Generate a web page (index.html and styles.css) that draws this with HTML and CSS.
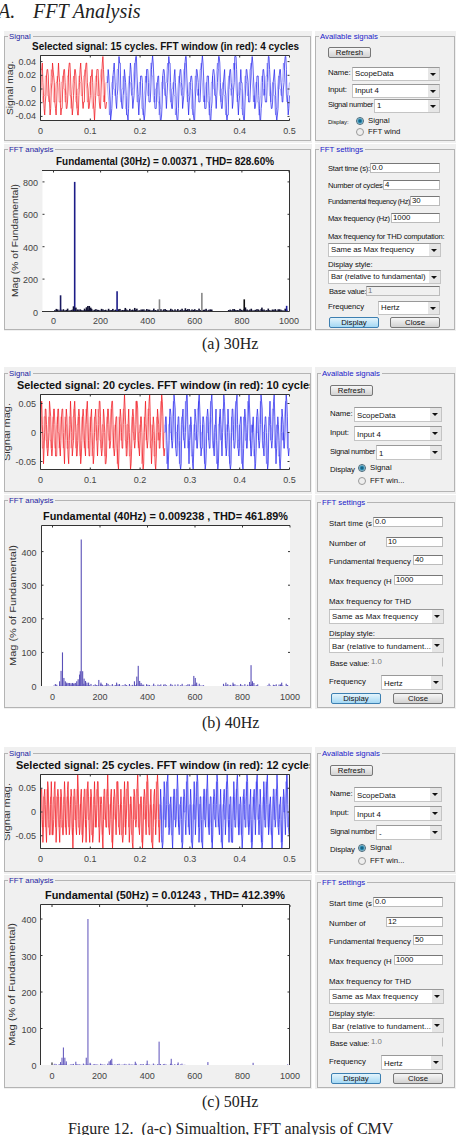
FILE: index.html
```html
<!DOCTYPE html>
<html lang="en">
<head>
<meta charset="utf-8">
<title>FFT Analysis</title>
<link rel="stylesheet" href="styles.css">
</head>
<body>
<h2><span class="num">A.</span>FFT Analysis</h2>

<div class="figure fig-a">
	<div class="col">
		<div class="pane"><div class="panel signal"><span class="legend">Signal</span><svg id="sig_a"></svg></div></div>
		<div class="pane"><div class="panel fft"><span class="legend">FFT analysis</span><svg id="fft_a"></svg></div></div>
	</div>
	<div class="col side">
		<div class="pane"><div class="panel signal"><span class="legend">Available signals</span>
			<div class="row r-refresh"><span class="btn small">Refresh</span></div>
			<div class="row r-name"><label>Name:</label><span class="combo w88">ScopeData</span></div>
			<div class="row r-input"><label>Input:</label><span class="combo w88">Input 4</span></div>
			<div class="row r-number"><label>Signal number</label><span class="combo w66">1</span></div>
			<div class="row r-radio"><label class="tiny">Display:</label><i class="radio on"></i><span>Signal</span></div>
			<div class="row r-radio"><label></label><i class="radio"></i><span>FFT wind</span></div>
		</div></div>
		<div class="pane"><div class="panel fft"><span class="legend">FFT settings</span>
			<div class="row s-start"><label>Start time (s):</label><span class="field w70">0.0</span></div>
			<div class="row s-cycles"><label>Number of cycles</label><span class="field w57">4</span></div>
			<div class="row s-fund"><label>Fundamental frequency (Hz)</label><span class="field w30">30</span></div>
			<div class="row s-max"><label>Max frequency (Hz)</label><span class="field w49">1000</span></div>
			<div class="row s-thd"><label>Max frequency for THD computation:</label></div>
			<div class="row s-same"><span class="combo full">Same as Max frequency</span></div>
			<div class="row s-style"><label>Display style:</label></div>
			<div class="row s-bar"><span class="combo full">Bar (relative to fundamental)</span></div>
			<div class="row s-base"><label>Base value:</label><span class="field off">1</span></div>
			<div class="row s-freq"><label>Frequency</label><span class="combo w62">Hertz</span></div>
			<div class="row s-btns"><span class="btn blue">Display</span><span class="btn">Close</span></div>
		</div></div>
	</div>
</div>
<p class="caption">(a) 30Hz</p>

<div class="figure fig-b">
	<div class="col">
		<div class="pane"><div class="panel signal"><span class="legend">Signal</span><svg id="sig_b"></svg></div></div>
		<div class="pane"><div class="panel fft"><span class="legend">FFT analysis</span><svg id="fft_b"></svg></div></div>
	</div>
	<div class="col side">
		<div class="pane"><div class="panel signal"><span class="legend">Available signals</span>
			<div class="row r-refresh"><span class="btn small">Refresh</span></div>
			<div class="row r-name"><label>Name:</label><span class="combo w88">ScopeData</span></div>
			<div class="row r-input"><label>Input:</label><span class="combo w88">Input 4</span></div>
			<div class="row r-number"><label>Signal number</label><span class="combo w66">1</span></div>
			<div class="row r-radio"><label>Display</label><i class="radio on"></i><span>Signal</span></div>
			<div class="row r-radio"><label></label><i class="radio"></i><span>FFT win...</span></div>
		</div></div>
		<div class="pane"><div class="panel fft"><span class="legend">FFT settings</span>
			<div class="row s-start"><label>Start time (s</label><span class="field w70">0.0</span></div>
			<div class="row s-cycles"><label>Number of</label><span class="field w57">10</span></div>
			<div class="row s-fund"><label>Fundamental frequency</label><span class="field w30">40</span></div>
			<div class="row s-max"><label>Max frequency (H</label><span class="field w49">1000</span></div>
			<div class="row s-thd"><label>Max frequency for THD</label></div>
			<div class="row s-same"><span class="combo full">Same as Max frequency</span></div>
			<div class="row s-style"><label>Display style:</label></div>
			<div class="row s-bar"><span class="combo full">Bar (relative to fundament...</span></div>
			<div class="row s-base"><label>Base value:</label><span class="field off">1.0</span></div>
			<div class="row s-freq"><label>Frequency</label><span class="combo w62">Hertz</span></div>
			<div class="row s-btns"><span class="btn blue">Display</span><span class="btn">Close</span></div>
		</div></div>
	</div>
</div>
<p class="caption cap-b">(b) 40Hz</p>

<div class="figure fig-c">
	<div class="col">
		<div class="pane"><div class="panel signal"><span class="legend">Signal</span><svg id="sig_c"></svg></div></div>
		<div class="pane"><div class="panel fft"><span class="legend">FFT analysis</span><svg id="fft_c"></svg></div></div>
	</div>
	<div class="col side">
		<div class="pane"><div class="panel signal"><span class="legend">Available signals</span>
			<div class="row r-refresh"><span class="btn small">Refresh</span></div>
			<div class="row r-name"><label>Name:</label><span class="combo w88">ScopeData</span></div>
			<div class="row r-input"><label>Input:</label><span class="combo w88">Input 4</span></div>
			<div class="row r-number"><label>Signal number</label><span class="combo w66">-</span></div>
			<div class="row r-radio"><label>Display</label><i class="radio on"></i><span>Signal</span></div>
			<div class="row r-radio"><label></label><i class="radio"></i><span>FFT win...</span></div>
		</div></div>
		<div class="pane"><div class="panel fft"><span class="legend">FFT settings</span>
			<div class="row s-start"><label>Start time (s</label><span class="field w70">0.0</span></div>
			<div class="row s-cycles"><label>Number of</label><span class="field w57">12</span></div>
			<div class="row s-fund"><label>Fundamental frequency</label><span class="field w30">50</span></div>
			<div class="row s-max"><label>Max frequency (H</label><span class="field w49">1000</span></div>
			<div class="row s-thd"><label>Max frequency for THD</label></div>
			<div class="row s-same"><span class="combo full">Same as Max frequency</span></div>
			<div class="row s-style"><label>Display style:</label></div>
			<div class="row s-bar"><span class="combo full">Bar (relative to fundament...</span></div>
			<div class="row s-base"><label>Base value:</label><span class="field off">1.0</span></div>
			<div class="row s-freq"><label>Frequency</label><span class="combo w62">Hertz</span></div>
			<div class="row s-btns"><span class="btn blue">Display</span><span class="btn">Close</span></div>
		</div></div>
	</div>
</div>
<p class="caption cap-c">(c) 50Hz</p>
<p class="title">Figure 12.&nbsp; (a-c) Simualtion, FFT analysis of CMV</p>

<script src="charts.js"></script>
</body>
</html>
```
FILE: styles.css
```css
body {
	margin:0;
	width:457px;
	height:1135px;
	overflow:hidden;
	background:#fff;
	color:#222;
	font-family:"Liberation Serif",serif;
}
h2 {
	margin:0;
	height:31px;
	font:italic 20px/23px "Liberation Serif",serif;
	white-space:nowrap;
}
h2 .num {
	display:inline-block;
	width:35px;
	margin-left:-2px;
}
.caption {
	margin:0;
	padding-left:202px;
	height:36px;
	font-size:16px;
	line-height:25px;
}
.cap-b {
	height:38px;
	line-height:28px;
}
.cap-c {
	height:32px;
}
.title {
	margin:-1px 0 0;
	padding-left:68px;
	font-size:16px;
	line-height:18px;
	white-space:nowrap;
	letter-spacing:-0.03px;
}

/* group boxes */
.figure {
	display:flex;
	gap:3px;
	padding-left:4px;
	font-family:"Liberation Sans",Arial,sans-serif;
}
.col {
	display:flex;
	flex-direction:column;
	gap:1px;
	width:308px;
}
.side {
	width:141px;
}
.pane {
	background:#f0f0f0;
	padding:5px 1px 2px 0;
}
.panel {
	position:relative;
	box-sizing:border-box;
	border:1px solid #b4b4b4;
}
.legend {
	position:absolute;
	left:3px;
	top:-5px;
	padding:0 2px 0 1px;
	background:#f0f0f0;
	color:#1c1ca0;
	font-size:7.8px;
	line-height:9px;
	white-space:nowrap;
}
.side .legend {
	color:#2020c8;
}
svg {
	display:block;
	width:100%;
	height:100%;
	overflow:hidden;
}
.fig-a .signal { height:105px; }
.fig-a .fft { height:181px; }
.fig-b .pane:first-child, .fig-c .pane:first-child { padding-top:6px; }
.fig-b .signal, .fig-c .signal { height:119px; }
.fig-b .fft, .fig-c .fft { height:208px; }
.fig-b .side .pane:last-child, .fig-c .side .pane:last-child { padding-top:7px; }
.fig-b .side .fft, .fig-c .side .fft { height:206px; }
.fig-b .side .panel, .fig-c .side .panel { margin-left:2px; }
.fig-a .pane:last-child, .fig-b .pane:last-child, .fig-c .pane:last-child { padding-bottom:1px; }

/* controls */
.row {
	display:flex;
	align-items:flex-start;
	width:112px;
	margin-left:12px;
	font-size:7.8px;
	line-height:10px;
	white-space:nowrap;
	color:#111;
}
.row label {
	flex:1;
	min-width:0;
	padding-top:1px;
	letter-spacing:-0.1px;
}
.row .tiny {
	font-size:6px;
}
.combo, .field, .btn {
	position:relative;
	box-sizing:border-box;
	flex:none;
}
.combo {
	height:15px;
	padding:2px 0 0 2px;
	border:1px solid #c4c4c4;
	border-top-color:#999;
	background:#fff;
}
.combo:before {
	content:"";
	position:absolute;
	right:0;
	top:0;
	width:11px;
	height:100%;
	background:#e6e6e6;
}
.combo:after {
	content:"";
	position:absolute;
	right:3px;
	top:5px;
	border:3px solid transparent;
	border-top:3px solid #111;
	border-bottom:0;
}
.field {
	height:10px;
	padding-left:1px;
	border:1px solid #bbb;
	border-top-color:#777;
	background:#fff;
	line-height:8px;
}
.off {
	width:74px;
	background:#f0f0f0;
	color:#777;
}
.w88 { width:88px; }
.w70 { width:70px; }
.w66 { width:66px; }
.w62 { width:62px; }
.w57 { width:57px; }
.w49 { width:49px; }
.w30 { width:30px; }
.full { width:113px; letter-spacing:-0.05px; }
.btn {
	width:50px;
	height:11px;
	border:1px solid #777;
	border-radius:2px;
	background:linear-gradient(#f6f6f6,#d2d2d2);
	text-align:center;
	line-height:9px;
}
.btn.small { width:43px; }
.btn.blue {
	border-color:#3c7fb1;
	background:linear-gradient(#e4f4fc,#a4d8f4);
}
.radio {
	box-sizing:border-box;
	width:8px;
	height:8px;
	margin:1px 4px 0 0;
	border:1px solid #999;
	border-radius:50%;
	background:#eee;
}
.radio.on {
	border-color:#467;
	background:radial-gradient(#0b4a66 0,#2c8fb8 45%,#d4e8f0 75%);
}
.r-radio label {
	flex:0 0 28px;
}
.r-number label {
	font-size:7.6px;
	letter-spacing:-0.3px;
}
.s-start label, .s-cycles label, .s-max label {
	font-size:7.6px;
	letter-spacing:-0.25px;
}
.s-thd label {
	font-size:7.6px;
	letter-spacing:-0.22px;
}
.s-base label {
	padding-left:1px;
	font-size:7.6px;
	letter-spacing:-0.2px;
}
.s-btns {
	justify-content:space-between;
}

.fig-a .r-refresh { padding-top:10px; height:20px; }
.fig-a .r-name { height:17px; }
.fig-a .r-input { height:15px; }
.fig-a .r-number { height:17px; }
.fig-a .r-radio { height:11px; }
.fig-a .s-start { padding-top:13px; height:17px; }
.fig-a .s-cycles { height:16px; }
.fig-a .s-fund { height:17px; }
.fig-a .s-fund label { font-size:7.2px; letter-spacing:-0.35px; }
.fig-a .s-max { height:18px; }
.fig-a .s-thd { width:122px; height:12px; }
.fig-a .s-same { height:16px; }
.fig-a .s-style { height:11px; }
.fig-a .s-bar { height:16px; }
.fig-a .s-base { height:15px; }
.fig-a .s-freq { height:16px; }
.fig-a .s-btns { width:111px; margin-left:13px; }
.fig-a .combo { height:14px; padding-top:1px; }
.fig-a .s-bar .combo { font-size:7.6px; }

.fig-b .r-refresh, .fig-c .r-refresh { padding-top:11px; height:22px; }
.fig-b .r-name, .fig-c .r-name { height:19px; }
.fig-b .r-input, .fig-c .r-input { height:19px; }
.fig-b .r-number, .fig-c .r-number { height:18px; }
.fig-b .r-radio, .fig-c .r-radio { height:13px; }
.fig-b .s-start, .fig-c .s-start { padding-top:14px; height:20px; }
.fig-b .s-cycles, .fig-c .s-cycles { height:18px; }
.fig-b .s-fund, .fig-c .s-fund { height:20px; }
.fig-b .s-max, .fig-c .s-max { height:20px; }
.fig-b .s-thd, .fig-c .s-thd { height:14px; }
.fig-b .s-same, .fig-c .s-same { height:18px; }
.fig-b .s-style, .fig-c .s-style { height:11px; }
.fig-b .s-bar, .fig-c .s-bar { height:19px; }
.fig-b .s-base, .fig-c .s-base { height:18px; }
.fig-b .s-freq, .fig-c .s-freq { height:18px; }
.fig-b .combo, .fig-c .combo { padding-top:3px; }
.fig-b .s-same .combo, .fig-c .s-same .combo { padding-top:2px; }
.fig-b label, .fig-c label { padding-top:2px; }
.fig-b .fft label, .fig-c .fft label { font-size:7.8px; letter-spacing:0; }
.fig-b .fft .s-start label, .fig-c .fft .s-start label,
.fig-b .fft .s-max label, .fig-c .fft .s-max label,
.fig-b .fft .s-thd label, .fig-c .fft .s-thd label { letter-spacing:0.08px; }
.fig-b .fft .s-base label, .fig-c .fft .s-base label { letter-spacing:-0.1px; }
.fig-b .fft .row, .fig-c .fft .row { width:114px; margin-left:11px; }
.fig-b .fft .full, .fig-c .fft .full { width:115px; letter-spacing:0.1px; }
.fig-b .off, .fig-c .off { border-color:#f0f0f0 #bbb #f0f0f0 #f0f0f0; }
.fig-b .fft .s-btns, .fig-c .fft .s-btns { width:112px; margin-left:13px; }

/* charts */
.t { font:9px "Liberation Sans",Arial,sans-serif; fill:#444; }
.yl { font:9.6px "Liberation Sans",Arial,sans-serif; fill:#333; }
.h { font:bold 10px "Liberation Sans",Arial,sans-serif; fill:#111; }
.axis { fill:none; stroke:#333; stroke-width:1; }
.wave { fill:none; stroke-width:0.9; opacity:0.85; }
.fill { opacity:0.4; }
.red { stroke:#f01820; }
.bluewave { stroke:#2a2aee; }
```
FILE: charts.js
```js
// plot area of each chart: x0,x1 = left/right, y0,y1 = top/bottom
var signals = [
	{id:"sig_a", view:"5 37 305 103", x0:40.5, x1:289.5, y0:55.5, y1:120.5, zero:89, unit:685, f:30, split:107, amp:.034, grow:.016, q:.0095,
	 yt:[[.04,"0.04"],[.02,"0.02"],[0,"0"],[-.02,"-0.02"],[-.04,"-0.04"]],
	 title:"Selected signal: 15 cycles. FFT window (in red): 4 cycles", tx:32, ty:50, tl:267, yx:13, ya:115, yb:54},
	{id:"sig_b", view:"5 374 305 117", x0:40.5, x1:289.5, y0:394.5, y1:469.5, zero:432.5, unit:580, f:40, split:165, amp:.046, grow:.022, q:.0135,
	 yt:[[.05,"0.05"],[0,"0"],[-.05,"-0.05"]],
	 title:"Selected signal: 20 cycles. FFT window (in red): 10 cycles", tx:17, ty:389, tl:298, yx:10, ya:461, yb:58},
	{id:"sig_c", view:"5 754 305 117", x0:40.5, x1:289.5, y0:774.5, y1:848.5, zero:812, unit:475, f:50, split:160, amp:.058, grow:.026, q:.016,
	 yt:[[.05,"0.05"],[0,"0"],[-.05,"-0.05"]],
	 title:"Selected signal: 25 cycles. FFT window (in red): 12 cycles", tx:16, ty:769, tl:299, yx:10, ya:841, yb:58}
];

var spectra = [
	{id:"fft_a", view:"5 150 305 179", x0:42.5, x1:289.5, y0:170.5, y1:311.5, xz:53.5, xs:.2355, ys:.162, step:200, max:800, color:"#111133", noise:12, w:1.6,
	 box:"M42 170.5H289.5V311.5H42",
	 bars:[[30,100,"#1a1a60"],[90,800,"#1c1c88"],[270,125,"#1c1c88"],[450,75,"#888"],[630,115,"#888"],[810,75,"#111"],[990,35,"#2020a0"],[85,32],[95,24],[140,26],[146,34],[152,34],[158,24],[305,22],[345,22],[560,20],[815,25],[885,24]],
	 gap:[[675,740]],
	 title:"Fundamental (30Hz) = 0.00371 , THD= 828.60%", tx:56, ty:165, tl:218, yx:18, ya:297, yb:113, ly:324},
	{id:"fft_b", view:"5 501 305 206", x0:41.5, x1:290, y0:525.5, y1:686, xz:52.5, xs:.2375, ys:.336, step:100, max:400, color:"#5a50b8", noise:7, w:1.1,
	 box:"M290 525.5H41.5V686",
	 bars:[[36,45],[42,100],[48,24],[30,14],[54,14],[60,10],[66,9],[72,9],[78,8],[84,9],[90,8],[96,9],[102,14],[108,20],[114,34],[117,44],[121,436],[127,44],[133,22],[139,15],[145,10],[152,10],[195,18],[204,10],[228,9],[270,10],[345,14],[355,28],[361,60],[367,15],[373,9],[595,30],[601,24],[607,10],[730,10],[760,10],[830,12],[836,62],[842,14],[848,9],[965,10]],
	 gap:[[640,720],[865,900]],
	 title:"Fundamental (40Hz) = 0.009238 , THD= 461.89%", tx:43, ty:520, tl:245, yx:16, ya:666, yb:121, ly:700},
	{id:"fft_c", view:"5 881 305 206", x0:40.5, x1:289.5, y0:905, y1:1065, xz:52, xs:.238, ys:.365, step:100, max:400, color:"#6a60c0", noise:4, w:1.1,
	 box:"M40.5 1065V904.5H289.5V1065",
	 bars:[[36,8],[42,20],[48,48],[54,20],[60,10],[0,7,"#222"],[100,9],[144,20],[151,400],[160,6],[240,10],[246,13],[251,17],[400,12],[450,64],[501,17],[530,7],[350,9],[655,8],[845,6]],
	 gap:[[560,990]],
	 title:"Fundamental (50Hz) = 0.01243 , THD= 412.39%", tx:45, ty:899, tl:240, yx:15, ya:1046, yb:123, ly:1079}
];

function text(cls, x, y, s, extra) {
	return '<text class="' + cls + '" x="' + x + '" y="' + y + '" ' + (extra || '') + '>' + s + '</text>';
}

function heading(c, ylabel) {
	return text('h', c.tx, c.ty, c.title, 'textLength="' + c.tl + '" lengthAdjust="spacingAndGlyphs"') +
		'<g transform="translate(' + c.yx + ' ' + c.ya + ') rotate(-90)">' +
		text('yl', 0, 0, ylabel, 'textLength="' + c.yb + '" lengthAdjust="spacingAndGlyphs"') + '</g>';
}

// third harmonic on top of the fundamental, held at quantised levels
function wave(c, from, to, scale, shift) {
	var d = '', px = (c.x1 - c.x0) / .5;
	for (var x = from; x <= to; x += .6) {
		var t = (x - c.x0) / px, w = 2 * Math.PI * c.f * t + shift;
		var k = c.grow * Math.min(1, t / .2);
		var v = scale * c.amp * Math.sin(3 * w) - k * Math.sin(w + .3) + c.q * .5 * Math.sin(w * 11.3);
		v = Math.round(v / c.q) * c.q;
		var y = Math.max(c.y0, Math.min(c.y1, c.zero - v * c.unit));
		d += (d ? 'L' : 'M') + x.toFixed(1) + ' ' + y.toFixed(1);
	}
	return d;
}

signals.forEach(function (c) {
	var s = '<rect x="' + c.x0 + '" y="' + c.y0 + '" width="' + (c.x1 - c.x0) + '" height="' + (c.y1 - c.y0) + '" fill="#fff"/>';
	s += '<path class="wave fill red" d="' + wave(c, c.x0, c.split, .6, .5) + '"/>';
	s += '<path class="wave fill bluewave" d="' + wave(c, c.split, c.x1, .6, .5) + '"/>';
	s += '<path class="wave red" d="' + wave(c, c.x0, c.split, 1, 0) + '"/>';
	s += '<path class="wave bluewave" d="' + wave(c, c.split, c.x1, 1, 0) + '"/>';
	var a = 'M' + c.x1 + ' ' + c.y0 + 'H' + c.x0 + 'V' + c.y1 + 'H' + c.x1;
	if (c.id == "sig_c") a += 'V' + c.y0;
	for (var i = 0; i <= 5; i++) {
		var x = c.x0 + i * (c.x1 - c.x0) / 5;
		a += 'M' + x + ' ' + c.y0 + 'v2M' + x + ' ' + c.y1 + 'v-2';
		s += text('t', x, c.y1 + 13.5, i ? '0.' + i : '0', 'text-anchor="middle"');
	}
	c.yt.forEach(function (p) {
		var y = c.zero - p[0] * c.unit;
		a += 'M' + c.x0 + ' ' + y + 'h2M' + c.x1 + ' ' + y + 'h-2';
		s += text('t', 36, y + 3, p[1], 'text-anchor="end"');
	});
	s += '<path class="axis" d="' + a + '"/>' + heading(c, 'Signal mag.');
	var el = document.getElementById(c.id);
	el.setAttribute('viewBox', c.view);
	el.innerHTML = s;
});

spectra.forEach(function (c) {
	var s = '<rect x="' + c.x0 + '" y="' + c.y0 + '" width="' + (c.x1 - c.x0) + '" height="' + (c.y1 - c.y0) + '" fill="#fff"/>';
	function bar(f, v, col) {
		var h = v * c.ys;
		s += '<rect x="' + (c.xz + f * c.xs - c.w / 2).toFixed(2) + '" y="' + (c.y1 - h).toFixed(2) + '" width="' + c.w + '" height="' + h.toFixed(2) + '" fill="' + (col || c.color) + '"/>';
	}
	for (var f = 6; f < 996; f += 6) {
		var skip = c.gap.some(function (g) { return f > g[0] && f < g[1]; });
		if (!skip) bar(f, c.noise * Math.abs(Math.sin(f * 1.7) * Math.cos(f * .31)) + (c.noise > 10 ? 6 : 0));
	}
	c.bars.forEach(function (b) { bar(b[0], b[1], b[2]); });
	var a = c.box;
	for (var h = 0; h <= 1000; h += 200) {
		var x = c.xz + h * c.xs;
		a += 'M' + x + ' ' + c.y0 + 'v2';
		s += text('t', x, c.ly, h, 'text-anchor="middle"');
	}
	for (var v = 0; v <= c.max; v += c.step) {
		var y = c.y1 - v * c.ys;
		if (v) a += 'M' + c.x0 + ' ' + y + 'h2M' + c.x1 + ' ' + y + 'h-2';
		s += text('t', c.id == "fft_a" ? 38 : 36.5, y + 4, v, 'text-anchor="end"');
	}
	s += '<path class="axis" d="' + a + '"/>' + heading(c, 'Mag (% of Fundamental)');
	var el = document.getElementById(c.id);
	el.setAttribute('viewBox', c.view);
	el.innerHTML = s;
});
```
